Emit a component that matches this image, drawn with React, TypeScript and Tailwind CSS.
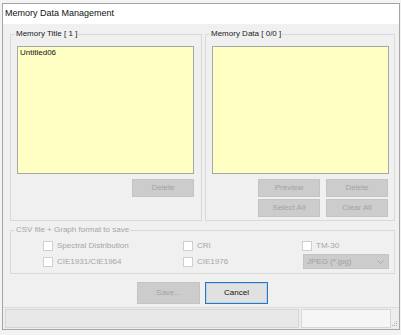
import React from "react";

function Btn({ label, w = 62, h = 18 }: { label: string; w?: number; h?: number }) {
  return (
    <div
      className="flex items-center justify-center bg-[#cccccc] border border-[#c4c4c4] text-[#a3a3a3] text-[8px] leading-[10px]"
      style={{ width: w, height: h }}
    >
      {label}
    </div>
  );
}

function Check({ label }: { label: string }) {
  return (
    <div className="flex items-center h-[10px]">
      <div className="w-[10px] h-[10px] border border-[#cfcfcf] bg-white shrink-0" />
      <span className="ml-[4px] text-[8px] leading-[10px] text-[#a6a6a6] whitespace-nowrap">{label}</span>
    </div>
  );
}

function Group({
  label,
  labelClass,
  className,
  bodyClass,
  children,
}: {
  label: string;
  labelClass: string;
  className: string;
  bodyClass: string;
  children: React.ReactNode;
}) {
  return (
    <div className={"flex flex-col " + className}>
      <div className="flex h-[10px] shrink-0">
        <div className="w-[5px] h-[5px] self-end border-l border-t border-[#d9d9d9]" />
        <span className={"px-[1px] text-[8px] leading-[10px] whitespace-nowrap " + labelClass}>{label}</span>
        <div className="flex-1 h-[5px] self-end border-t border-r border-[#d9d9d9]" />
      </div>
      <div className={"flex-1 border-l border-r border-b border-[#d9d9d9] " + bodyClass}>{children}</div>
    </div>
  );
}

export default function App() {
  return (
    <div className="w-[401px] h-[335px] bg-[#f3f3f3] pt-[3px] pl-[2px] overflow-hidden font-['Liberation_Sans',Arial,sans-serif]">
      <div className="w-[398px] h-[327px] border border-[#a5a5a5] bg-[#f0f0f0] flex flex-col">
        <div className="h-[20px] bg-white flex items-center pl-[2px] text-[9px] text-[#111] shrink-0">
          Memory Data Management
        </div>
        <div className="flex-1 flex flex-col pl-[7px] pr-[3px] pt-[5px]">
          <div className="flex gap-[3px]">
            <Group
              label="Memory Title [ 1 ]"
              labelClass="text-[#1a1a1a]"
              className="w-[192px]"
              bodyClass="pl-[6px] pr-[7px] pb-[3px]"
            >
              <div className="mt-[7px] w-[177px] h-[128px] bg-[#ffffc4] border border-[#a8a8a8] pl-[2px] pt-[1px] text-[8px] leading-[10px] text-[#111]">
                Untitled06
              </div>
              <div className="mt-[5px] flex justify-end">
                <Btn label="Delete" />
              </div>
            </Group>
            <Group
              label="Memory Data [ 0/0 ]"
              labelClass="text-[#1a1a1a]"
              className="w-[190px]"
              bodyClass="pl-[6px] pr-[5px] pb-[3px]"
            >
              <div className="mt-[7px] w-[177px] h-[128px] bg-[#ffffc4] border border-[#a8a8a8]" />
              <div className="mt-[5px] w-[177px] flex flex-col items-end gap-[2px] pr-[1px]">
                <div className="flex gap-[6px]">
                  <Btn label="Preview" />
                  <Btn label="Delete" />
                </div>
                <div className="flex gap-[6px]">
                  <Btn label="Select All" />
                  <Btn label="Clear All" />
                </div>
              </div>
            </Group>
          </div>
          <Group
            label="CSV file + Graph format to save"
            labelClass="text-[#a6a6a6]"
            className="mt-[4px] w-[385px]"
            bodyClass="pl-[32px] pb-[4px]"
          >
            <div className="mt-[6px] grid grid-cols-[140px_119px_86px] gap-y-[3px] items-center">
              <Check label="Spectral Distribution" />
              <Check label="CRI" />
              <Check label="TM-30" />
              <Check label="CIE1931/CIE1964" />
              <Check label="CIE1976" />
              <div className="ml-[1px] w-[86px] h-[15px] bg-[#cccccc] border border-[#c4c4c4] flex items-center justify-between pl-[3px] pr-[4px]">
                <span className="text-[8px] leading-[10px] text-[#a0a0a0]">JPEG (*.jpg)</span>
                <svg width="7" height="4" viewBox="0 0 7 4">
                  <path d="M0.5 0.5 L3.5 3.5 L6.5 0.5" stroke="#a8a8a8" fill="none" strokeWidth="1" />
                </svg>
              </div>
            </div>
          </Group>
          <div className="mt-[8px] flex gap-[5px] pl-[127px]">
            <Btn label="Save..." w={63} h={22} />
            <div className="w-[63px] h-[22px] flex items-center justify-center bg-[#e1e1e1] border border-[#2f74b5] shadow-[inset_0_0_0_1px_#b9d4ee] text-[8px] leading-[10px] text-[#111]">
              Cancel
            </div>
          </div>
        </div>
        <div className="h-[22px] shrink-0 flex bg-[#ededed] border-t border-[#dcdcdc] pl-[2px] pr-[1px] pt-[1px] pb-[1px] gap-[2px] mt-[3px]">
          <div className="flex-1 border border-[#d6d6d6] bg-[#e8e8e8]" />
          <div className="w-[90px] border border-[#d6d6d6] bg-[#f6f6f6]" />
          <div className="w-[5px] relative">
            <svg width="6" height="8" viewBox="0 0 6 8" className="absolute bottom-0 right-0">
              <rect x="4" y="1" width="1" height="1" fill="#b0b0b0" />
              <rect x="2" y="3" width="1" height="1" fill="#b0b0b0" />
              <rect x="4" y="3" width="1" height="1" fill="#b0b0b0" />
              <rect x="0" y="5" width="1" height="1" fill="#b0b0b0" />
              <rect x="2" y="5" width="1" height="1" fill="#b0b0b0" />
              <rect x="4" y="5" width="1" height="1" fill="#b0b0b0" />
            </svg>
          </div>
        </div>
      </div>
    </div>
  );
}
